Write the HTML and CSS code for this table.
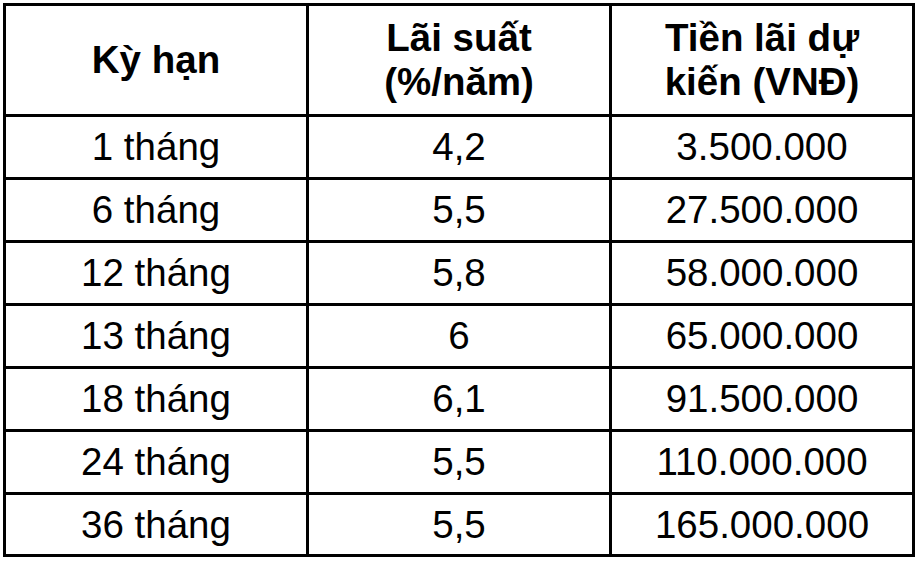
FILE: index.html
```html
<!DOCTYPE html>
<html lang="vi">
<head>
<meta charset="utf-8">
<title>Lãi suất</title>
<link rel="stylesheet" href="styles.css">
</head>
<body>
<table class="rates">
  <thead>
    <tr>
      <th>Kỳ hạn</th>
      <th>Lãi suất<br>(%/năm)</th>
      <th>Tiền lãi dự<br>kiến (VNĐ)</th>
    </tr>
  </thead>
  <tbody>
    <tr><td>1 tháng</td><td>4,2</td><td>3.500.000</td></tr>
    <tr><td>6 tháng</td><td>5,5</td><td>27.500.000</td></tr>
    <tr><td>12 tháng</td><td>5,8</td><td>58.000.000</td></tr>
    <tr><td>13 tháng</td><td>6</td><td>65.000.000</td></tr>
    <tr><td>18 tháng</td><td>6,1</td><td>91.500.000</td></tr>
    <tr><td>24 tháng</td><td>5,5</td><td>110.000.000</td></tr>
    <tr class="last"><td>36 tháng</td><td>5,5</td><td>165.000.000</td></tr>
  </tbody>
</table>
</body>
</html>
```
FILE: styles.css
```css
html, body {
  margin: 0;
  padding: 0;
  background: #ffffff;
}

body {
  padding: 3px 0 0 3px;
  font-family: "Liberation Sans", Arial, sans-serif;
  color: #000000;
}

.rates {
  border-collapse: separate;
  border-spacing: 0;
  border-top: 3px solid #000;
  border-left: 3px solid #000;
  table-layout: fixed;
  width: 912px;
  font-size: 38.5px;
}

.rates th,
.rates td {
  width: 300px;
  padding: 0;
  border-right: 3px solid #000;
  border-bottom: 3px solid #000;
  text-align: center;
  vertical-align: middle;
  line-height: normal;
}

.rates th {
  height: 108px;
  font-weight: bold;
}

.rates td {
  height: 60px;
  font-weight: normal;
}

.rates .last td {
  height: 59px;
}
```
